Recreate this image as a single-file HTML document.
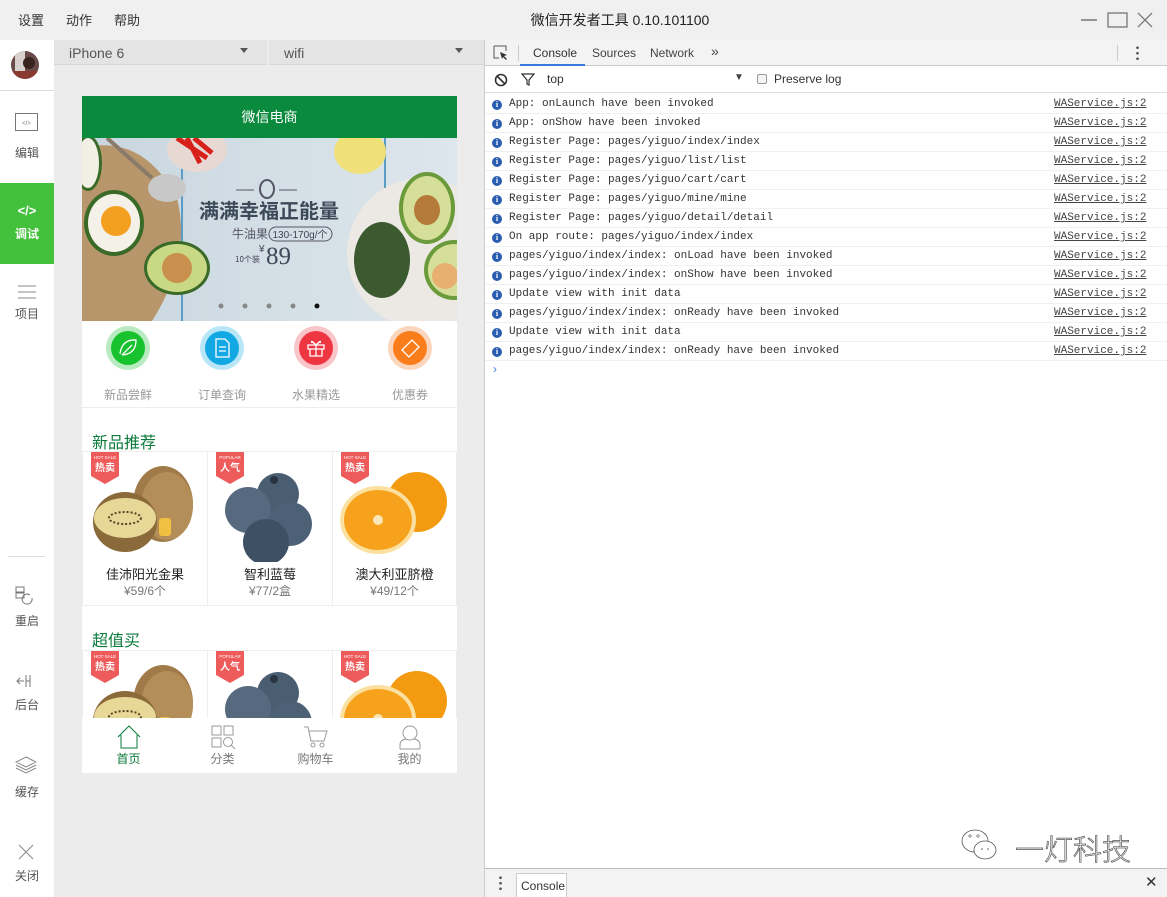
<!DOCTYPE html>
<html><head><meta charset="utf-8">
<style>
*{margin:0;padding:0;box-sizing:border-box}
body{width:1167px;height:897px;overflow:hidden;background:#f0f0f0;font-family:"Liberation Sans","Noto Sans CJK SC",sans-serif;position:relative;color:#333}
.abs{position:absolute}
.menu{top:10px;font-size:13px;color:#333}
.side{left:0;top:40px;width:54px;height:857px;background:#fff}
.sl{position:absolute;left:0;width:54px;text-align:center;font-size:12px;color:#555}
.sim{left:54px;top:40px;width:430px;height:857px;background:#ececec}
.sel{top:40px;height:25px;background:#e4e4e4;font-size:14px;color:#555;padding:5px 0 0 15px;border-bottom:1px solid #d8d8d8}
.caret{position:absolute;top:8px;width:0;height:0;border-left:4px solid transparent;border-right:4px solid transparent;border-top:5px solid #555}
.phone{left:82px;top:96px;width:375px;height:677px;background:#fff;overflow:hidden}
.dev{left:484px;top:40px;width:683px;height:857px;background:#fff;border-left:1px solid #ccc}
.row{position:absolute;left:0;width:683px;height:19px;border-bottom:1px solid #f0f0f0;font-family:"Liberation Mono",monospace;font-size:11px;color:#333;line-height:19px;padding-left:24px}
.row .i{position:absolute;left:7px;top:5px;width:10px;height:10px;border-radius:50%;background:#2a5db0;color:#fff;font-size:8px;line-height:10px;text-align:center;font-family:"Liberation Serif",serif;font-weight:bold}
.row .src{position:absolute;left:569px;text-decoration:underline;color:#444}
.cell{position:absolute;width:124px;height:155px;border:1px solid #eee;background:#fff;overflow:hidden}
.cell .n{position:absolute;left:0;width:100%;top:112px;text-align:center;font-size:13px;color:#222}
.cell .p{position:absolute;left:0;width:100%;top:130px;text-align:center;font-size:12px;color:#777}
.tab{position:absolute;top:0;width:93px;text-align:center;font-size:12px;color:#777}
</style></head><body>
<div class="abs menu" style="left:18px">设置</div>
<div class="abs menu" style="left:66px">动作</div>
<div class="abs menu" style="left:114px">帮助</div>
<div class="abs" style="left:0;width:1240px;top:10px;text-align:center;font-size:14px;color:#222">微信开发者工具 0.10.101100</div>
<svg class="abs" style="left:1075px;top:10px" width="85" height="20"><line x1="6" y1="10" x2="22" y2="10" stroke="#777" stroke-width="1.5"/><rect x="33" y="3" width="19" height="14" fill="none" stroke="#777" stroke-width="1.3"/><path d="M63 3L77 17M77 3L63 17" stroke="#777" stroke-width="1.3"/></svg>

<div class="abs side">
  <svg class="abs" style="left:11px;top:11px" width="28" height="28"><defs><clipPath id="c"><circle cx="14" cy="14" r="14"/></clipPath></defs><g clip-path="url(#c)"><rect width="28" height="28" fill="#6a4a48"/><rect x="4" y="0" width="10" height="20" fill="#d8d0cc"/><circle cx="18" cy="12" r="6" fill="#3a2420"/><rect x="0" y="20" width="28" height="8" fill="#8a3a30"/></g></svg>
  <div class="abs" style="left:0;top:50px;width:54px;border-top:1px solid #ddd"></div>
  <svg class="abs" style="left:15px;top:73px" width="23" height="19"><rect x="0.5" y="0.5" width="22" height="17" fill="none" stroke="#777"/><text x="11.5" y="12" font-size="6" text-anchor="middle" fill="#777" font-family="Liberation Sans">&lt;/&gt;</text></svg>
  <div class="sl" style="top:104px">编辑</div>
  <div class="abs" style="left:0;top:143px;width:54px;height:81px;background:#44c13c"></div>
  <div class="sl" style="top:163px;color:#fff;font-size:13px;font-weight:bold">&lt;/&gt;</div>
  <div class="sl" style="top:185px;color:#fff;font-weight:bold">调试</div>
  <svg class="abs" style="left:18px;top:245px" width="18" height="14"><path d="M0 1H18M0 7H18M0 13H18" stroke="#888"/></svg>
  <div class="sl" style="top:265px">项目</div>
  <div class="abs" style="left:8px;top:516px;width:37px;border-top:1px solid #ddd"></div>
  <svg class="abs" style="left:15px;top:546px" width="22" height="22"><rect x="1" y="1" width="8" height="5" fill="none" stroke="#777"/><rect x="1" y="7" width="8" height="5" fill="none" stroke="#777"/><path d="M17 12a5 5 0 1 1-2-3" fill="none" stroke="#777"/></svg>
  <div class="sl" style="top:572px">重启</div>
  <svg class="abs" style="left:16px;top:633px" width="22" height="16"><path d="M1 8H8M4 5L1 8L4 11M10 2V14M14 2V14M10 8H14" stroke="#777" fill="none"/></svg>
  <div class="sl" style="top:656px">后台</div>
  <svg class="abs" style="left:15px;top:716px" width="22" height="18"><path d="M11 1L21 6L11 11L1 6Z M1 9L11 14L21 9 M1 12L11 17L21 12" stroke="#888" fill="none"/></svg>
  <div class="sl" style="top:743px">缓存</div>
  <svg class="abs" style="left:18px;top:804px" width="16" height="16"><path d="M1 1L15 15M15 1L1 15" stroke="#888"/></svg>
  <div class="sl" style="top:827px">关闭</div>
</div>

<div class="abs sim"></div>
<div class="abs sel" style="left:54px;width:213px">iPhone 6<span class="caret" style="left:186px"></span></div>
<div class="abs sel" style="left:269px;width:215px">wifi<span class="caret" style="left:186px"></span></div>

<div class="abs phone">
  <div class="abs" style="left:0;top:0;width:375px;height:42px;background:#098a3c;color:#fff;text-align:center;font-size:14px;line-height:42px">微信电商</div>
  <svg class="abs" style="left:0;top:42px" width="375" height="183">
    <defs><linearGradient id="bg" x1="0" x2="1"><stop offset="0" stop-color="#c9d6de"/><stop offset="1" stop-color="#dde6ec"/></linearGradient></defs>
    <rect width="375" height="183" fill="url(#bg)"/>
    <line x1="100" y1="0" x2="100" y2="183" stroke="#5a9cc4" stroke-width="2"/>
    <line x1="303" y1="0" x2="303" y2="50" stroke="#5a9cc4" stroke-width="2"/>
    <path d="M0 10 Q60 -5 95 60 Q110 120 70 183 L0 183Z" fill="#b8966c"/>
    <path d="M25 0 L70 40" stroke="#8a7a6a" stroke-width="4"/>
    <ellipse cx="85" cy="50" rx="19" ry="14" fill="#c8c8c8"/>
    <ellipse cx="32" cy="85" rx="30" ry="33" fill="#3a6a28"/><ellipse cx="32" cy="85" rx="26" ry="29" fill="#f4f2e8"/><circle cx="34" cy="83" r="15" fill="#f3a020"/>
    <ellipse cx="6" cy="25" rx="14" ry="28" fill="#3a6a28"/><ellipse cx="6" cy="25" rx="11" ry="25" fill="#f2efe4"/>
    <ellipse cx="95" cy="130" rx="33" ry="27" fill="#3a6a28"/><ellipse cx="95" cy="130" rx="30" ry="24" fill="#c9d884"/><circle cx="95" cy="130" r="15" fill="#c8904c"/>
    <ellipse cx="115" cy="12" rx="30" ry="22" fill="#e8d8d4"/><path d="M95 0 L125 20 M105 0 L118 25 M112 0 L130 15" stroke="#d8201a" stroke-width="5"/>
    <ellipse cx="278" cy="14" rx="26" ry="22" fill="#f0e07a"/>
    <circle cx="340" cy="115" r="75" fill="#ece9e4"/>
    <ellipse cx="300" cy="122" rx="28" ry="38" fill="#3c5a30"/>
    <ellipse cx="345" cy="70" rx="28" ry="36" fill="#6a9a3a"/><ellipse cx="345" cy="70" rx="24" ry="32" fill="#d6df9a"/><ellipse cx="345" cy="72" rx="13" ry="15" fill="#b47a3a"/>
    <ellipse cx="372" cy="132" rx="30" ry="30" fill="#6a9a3a"/><ellipse cx="372" cy="132" rx="26" ry="26" fill="#d6df9a"/><circle cx="363" cy="138" r="13" fill="#e8b070"/>
    <path d="M154 52H172M197 52H215" stroke="#556" stroke-width="1"/><ellipse cx="185" cy="51" rx="7" ry="9" fill="none" stroke="#556" stroke-width="2"/>
    <text x="187" y="80" font-size="20" font-weight="bold" fill="#3d4a5a" text-anchor="middle" font-family="Noto Sans CJK SC">满满幸福正能量</text>
    <text x="150" y="100" font-size="12" fill="#556" font-family="Noto Sans CJK SC">牛油果</text>
    <rect x="187" y="89" width="63" height="14" rx="7" fill="none" stroke="#556"/><text x="218" y="100" font-size="10" fill="#445" text-anchor="middle" font-family="Liberation Sans">130-170g/个</text>
    <text x="153" y="124" font-size="8" fill="#445" font-family="Noto Sans CJK SC">10个装</text>
    <text x="177" y="114" font-size="10" fill="#445" font-family="Liberation Sans">¥</text>
    <text x="184" y="126" font-size="25" fill="#3d4a5a" font-family="Liberation Serif">89</text>
    <circle cx="139" cy="168" r="2.5" fill="#888"/><circle cx="163" cy="168" r="2.5" fill="#888"/><circle cx="187" cy="168" r="2.5" fill="#888"/><circle cx="211" cy="168" r="2.5" fill="#888"/><circle cx="235" cy="168" r="2.5" fill="#111"/>
  </svg>
  <svg class="abs" style="left:0;top:225px" width="375" height="55">
    <circle cx="46" cy="27" r="22" fill="#b8ecc0"/><circle cx="46" cy="27" r="17" fill="#17c22e"/><path d="M38 33 Q40 18 54 19 Q54 33 40 34 M40 34L50 24" stroke="#fff" fill="none" stroke-width="1.3"/>
    <circle cx="140" cy="27" r="22" fill="#b8e6f6"/><circle cx="140" cy="27" r="17" fill="#12a8e4"/><path d="M134 18H143L147 22V36H134Z M137 26H144M137 30H144" stroke="#fff" fill="none" stroke-width="1.3"/>
    <circle cx="234" cy="27" r="22" fill="#f8c6c8"/><circle cx="234" cy="27" r="17" fill="#ee3542"/><path d="M226 24H242V28H226Z M228 28V35H240V28 M234 24V35 M234 24Q228 18 230 22 M234 24Q240 18 238 22" stroke="#fff" fill="none" stroke-width="1.3"/>
    <circle cx="328" cy="27" r="22" fill="#fbd6bc"/><circle cx="328" cy="27" r="17" fill="#fa7d1c"/><path d="M320 29L330 19L337 26L327 36Z" stroke="#fff" fill="none" stroke-width="1.3"/>
  </svg>
  <div class="abs" style="left:0;top:290px;width:375px;font-size:12px;color:#999">
    <span class="abs" style="left:22px">新品尝鲜</span><span class="abs" style="left:116px">订单查询</span><span class="abs" style="left:210px">水果精选</span><span class="abs" style="left:310px">优惠券</span>
  </div>
  <div class="abs" style="left:0;top:311px;width:375px;border-top:1px solid #eee"></div>
  <div class="abs" style="left:10px;top:333px;font-size:16px;color:#0a7a3a">新品推荐</div>
  <div class="abs" style="left:10px;top:531px;font-size:16px;color:#0a7a3a">超值买</div>

  <svg width="0" height="0" style="position:absolute"><defs>
    <g id="kiwi"><ellipse cx="80" cy="46" rx="30" ry="38" fill="#a07a48"/><ellipse cx="84" cy="48" rx="26" ry="34" fill="#b48e58"/><rect x="76" y="60" width="12" height="18" rx="3" fill="#f0c040"/><ellipse cx="42" cy="64" rx="32" ry="30" fill="#8a6a3a"/><ellipse cx="42" cy="60" rx="31" ry="20" fill="#e8d898"/><ellipse cx="42" cy="60" rx="16" ry="6" fill="none" stroke="#5a4020" stroke-dasharray="2 2" stroke-width="2"/></g>
    <g id="blue"><circle cx="70" cy="42" r="21" fill="#4a5e72"/><circle cx="40" cy="58" r="23" fill="#56697e"/><circle cx="82" cy="72" r="22" fill="#4c6076"/><circle cx="58" cy="90" r="23" fill="#3e5064"/><circle cx="66" cy="28" r="4" fill="#2a3440"/></g>
    <g id="orng"><circle cx="84" cy="50" r="30" fill="#f49a10"/><ellipse cx="45" cy="68" rx="38" ry="34" fill="#fbe0a0"/><ellipse cx="45" cy="68" rx="34" ry="30" fill="#f7a21c"/><circle cx="45" cy="68" r="5" fill="#fbe6b8"/></g>
    <g id="hot"><path d="M0 0H28V24L14 32L0 24Z" fill="#ee5b5b"/><text x="14" y="7" font-size="4.5" fill="#fff" text-anchor="middle" font-family="Liberation Sans">HOT SALE</text><text x="14" y="19" font-size="10" fill="#fff" text-anchor="middle" font-family="Noto Sans CJK SC" font-weight="bold">热卖</text></g>
    <g id="pop"><path d="M0 0H28V24L14 32L0 24Z" fill="#ee5b5b"/><text x="14" y="7" font-size="4.5" fill="#fff" text-anchor="middle" font-family="Liberation Sans">POPULAR</text><text x="14" y="19" font-size="10" fill="#fff" text-anchor="middle" font-family="Noto Sans CJK SC" font-weight="bold">人气</text></g>
  </defs></svg>

  <div class="cell" style="left:0;top:355px;width:126px"><svg class="abs" style="left:0;top:0" width="124" height="110"><use href="#kiwi" y="6"/><use href="#hot" x="8"/></svg><div class="n">佳沛阳光金果</div><div class="p">¥59/6个</div></div>
  <div class="cell" style="left:125px;top:355px;width:126px"><svg class="abs" style="left:0;top:0" width="124" height="110"><use href="#blue"/><use href="#pop" x="8"/></svg><div class="n">智利蓝莓</div><div class="p">¥77/2盒</div></div>
  <div class="cell" style="left:250px;top:355px;width:125px"><svg class="abs" style="left:0;top:0" width="124" height="110"><use href="#orng"/><use href="#hot" x="8"/></svg><div class="n">澳大利亚脐橙</div><div class="p">¥49/12个</div></div>

  <div class="cell" style="left:0;top:554px;width:126px"><svg class="abs" style="left:0;top:0" width="124" height="110"><use href="#kiwi" y="6"/><use href="#hot" x="8"/></svg></div>
  <div class="cell" style="left:125px;top:554px;width:126px"><svg class="abs" style="left:0;top:0" width="124" height="110"><use href="#blue"/><use href="#pop" x="8"/></svg></div>
  <div class="cell" style="left:250px;top:554px;width:125px"><svg class="abs" style="left:0;top:0" width="124" height="110"><use href="#orng"/><use href="#hot" x="8"/></svg></div>

  <div class="abs" style="left:0;top:622px;width:375px;height:55px;background:#fff">
    <div class="tab" style="left:0"><svg width="26" height="26" style="margin-top:6px"><path d="M2 13L13 2L24 13M5 11V24H21V11" fill="none" stroke="#0a7a3a" stroke-width="1"/></svg><div style="color:#0a7a3a;margin-top:-3px">首页</div></div>
    <div class="tab" style="left:94px"><svg width="26" height="26" style="margin-top:6px"><rect x="2" y="2" width="9" height="9" fill="none" stroke="#999"/><rect x="14" y="2" width="9" height="9" fill="none" stroke="#999"/><rect x="2" y="14" width="9" height="9" fill="none" stroke="#999"/><circle cx="18" cy="18" r="4.5" fill="none" stroke="#999"/><path d="M21 21L25 25" stroke="#999"/></svg><div style="margin-top:-3px">分类</div></div>
    <div class="tab" style="left:187px"><svg width="26" height="26" style="margin-top:6px"><path d="M1 3H5L8 17H21L24 7H6" fill="none" stroke="#999"/><circle cx="10" cy="21" r="2" fill="none" stroke="#999"/><circle cx="19" cy="21" r="2" fill="none" stroke="#999"/></svg><div style="margin-top:-3px">购物车</div></div>
    <div class="tab" style="left:281px"><svg width="26" height="26" style="margin-top:6px"><circle cx="13" cy="9" r="7" fill="none" stroke="#999"/><path d="M3 25V21Q3 16 9 15M23 25V21Q23 16 17 15M3 25H23" fill="none" stroke="#999"/></svg><div style="margin-top:-3px">我的</div></div>
  </div>
</div>

<div class="abs dev">
  <div class="abs" style="left:0;top:0;width:683px;height:26px;background:#f3f3f3;border-bottom:1px solid #ccc"></div>
  <svg class="abs" style="left:8px;top:5px" width="16" height="16"><path d="M1 1H13V6M1 1V13H6" fill="none" stroke="#555"/><path d="M7 7L14 10L11 11L14 14L13 15L10 12L9 14Z" fill="#333"/></svg>
  <div class="abs" style="left:33px;top:5px;height:16px;border-left:1px solid #ccc"></div>
  <div class="abs" style="left:48px;top:6px;font-size:12px;color:#333">Console</div>
  <div class="abs" style="left:35px;top:24px;width:65px;height:2px;background:#3a7be0"></div>
  <div class="abs" style="left:107px;top:6px;font-size:12px;color:#444">Sources</div>
  <div class="abs" style="left:165px;top:6px;font-size:12px;color:#444">Network</div>
  <div class="abs" style="left:226px;top:3px;font-size:14px;color:#444">»</div>
  <div class="abs" style="left:632px;top:5px;height:16px;border-left:1px solid #ccc"></div>
  <div class="abs" style="left:651px;top:5px;width:3px;height:16px;background:radial-gradient(circle,#555 1.2px,transparent 1.5px) 0 0/3px 5.5px"></div>
  <div class="abs" style="left:0;top:26px;width:683px;height:27px;border-bottom:1px solid #ddd;background:#fff"></div>
  <svg class="abs" style="left:8px;top:32px" width="16" height="16"><circle cx="8" cy="8" r="5.5" fill="none" stroke="#333" stroke-width="1.6"/><path d="M4 4L12 12" stroke="#333" stroke-width="1.6"/></svg>
  <svg class="abs" style="left:36px;top:33px" width="14" height="13"><path d="M1 1H13L8 7V12L6 11V7Z" fill="none" stroke="#333" stroke-width="1.2"/></svg>
  <div class="abs" style="left:62px;top:32px;font-size:12px;color:#333">top</div>
  <div class="abs" style="left:249px;top:32px;font-size:10px;color:#444">▼</div>
  <div class="abs" style="left:272px;top:34px;width:10px;height:10px;border:1px solid #999;border-radius:2px;background:#f4f4f4"></div>
  <div class="abs" style="left:289px;top:32px;font-size:12px;color:#333">Preserve log</div>

  <div class="row" style="top:55px"><span class="i">i</span>App: onLaunch have been invoked<span class="src">WAService.js:2</span></div>
  <div class="row" style="top:74px"><span class="i">i</span>App: onShow have been invoked<span class="src">WAService.js:2</span></div>
  <div class="row" style="top:93px"><span class="i">i</span>Register Page: pages/yiguo/index/index<span class="src">WAService.js:2</span></div>
  <div class="row" style="top:112px"><span class="i">i</span>Register Page: pages/yiguo/list/list<span class="src">WAService.js:2</span></div>
  <div class="row" style="top:131px"><span class="i">i</span>Register Page: pages/yiguo/cart/cart<span class="src">WAService.js:2</span></div>
  <div class="row" style="top:150px"><span class="i">i</span>Register Page: pages/yiguo/mine/mine<span class="src">WAService.js:2</span></div>
  <div class="row" style="top:169px"><span class="i">i</span>Register Page: pages/yiguo/detail/detail<span class="src">WAService.js:2</span></div>
  <div class="row" style="top:188px"><span class="i">i</span>On app route: pages/yiguo/index/index<span class="src">WAService.js:2</span></div>
  <div class="row" style="top:207px"><span class="i">i</span>pages/yiguo/index/index: onLoad have been invoked<span class="src">WAService.js:2</span></div>
  <div class="row" style="top:226px"><span class="i">i</span>pages/yiguo/index/index: onShow have been invoked<span class="src">WAService.js:2</span></div>
  <div class="row" style="top:245px"><span class="i">i</span>Update view with init data<span class="src">WAService.js:2</span></div>
  <div class="row" style="top:264px"><span class="i">i</span>pages/yiguo/index/index: onReady have been invoked<span class="src">WAService.js:2</span></div>
  <div class="row" style="top:283px"><span class="i">i</span>Update view with init data<span class="src">WAService.js:2</span></div>
  <div class="row" style="top:302px"><span class="i">i</span>pages/yiguo/index/index: onReady have been invoked<span class="src">WAService.js:2</span></div>
  <div class="abs" style="left:8px;top:322px;font-size:12px;color:#3a7be0">›</div>

  <svg class="abs" style="left:476px;top:786px" width="40" height="38"><ellipse cx="14" cy="15" rx="13" ry="11" fill="none" stroke="#555" stroke-width="0.8"/><ellipse cx="24" cy="24" rx="11" ry="9" fill="#fff" stroke="#555" stroke-width="0.8"/><circle cx="9" cy="10" r="1.2" fill="none" stroke="#555" stroke-width="0.6"/><circle cx="17" cy="10" r="1.2" fill="none" stroke="#555" stroke-width="0.6"/><circle cx="21" cy="23" r="0.8" fill="#555"/><circle cx="27" cy="23" r="0.8" fill="#555"/></svg>
  <div class="abs" style="left:530px;top:787px;font-size:29px;color:#fff;-webkit-text-stroke:0.7px #555;font-family:'Noto Sans CJK SC',sans-serif;font-weight:300">一灯科技</div>

  <div class="abs" style="left:0;top:828px;width:683px;height:29px;background:#f3f3f3;border-top:1px solid #bbb"></div>
  <div class="abs" style="left:14px;top:835px;width:3px;height:16px;background:radial-gradient(circle,#555 1.2px,transparent 1.5px) 0 0/3px 5.5px"></div>
  <div class="abs" style="left:31px;top:833px;width:51px;height:24px;background:#fff;border:1px solid #ccc;border-bottom:none;font-size:12px;padding:5px 0 0 4px;color:#333">Console</div>
  <div class="abs" style="left:660px;top:833px;font-size:15px;color:#333">✕</div>
</div>
</body></html>
